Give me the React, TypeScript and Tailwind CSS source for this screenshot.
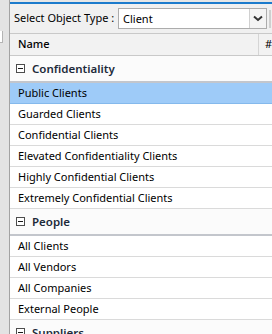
import React from 'react';

const groups = [
  {
    name: 'Confidentiality',
    items: [
      'Public Clients',
      'Guarded Clients',
      'Confidential Clients',
      'Elevated Confidentiality Clients',
      'Highly Confidential Clients',
      'Extremely Confidential Clients',
    ],
  },
  {
    name: 'People',
    items: ['All Clients', 'All Vendors', 'All Companies', 'External People'],
  },
  {
    name: 'Suppliers',
    items: ['All Suppliers'],
  },
];

const MinusBox: React.FC = () => (
  <svg width="9" height="9" viewBox="0 0 9 9" className="shrink-0">
    <rect x="0.5" y="0.5" width="8" height="8" fill="#fff" stroke="#4d4d4d" />
    <line x1="2" y1="4.5" x2="7" y2="4.5" stroke="#1a1a1a" />
  </svg>
);

const App: React.FC = () => {
  const selected = 'Public Clients';

  return (
    <div
      className="flex w-[272px] h-[334px] overflow-hidden bg-[#e6e6e6] text-[11px] text-black"
      style={{ fontFamily: '"Noto Sans", "Open Sans", sans-serif' }}
    >
      {/* Left pane edge */}
      <div className="w-[10px] shrink-0 flex flex-col border-r border-[#a3a3a3] bg-[#e3e3e3]">
        <div className="h-[31px]" />
        <div className="w-[3px] h-[12px] bg-white border-r border-b border-[#b4b4b4]" />
      </div>

      <div className="flex-1 min-w-0 flex flex-col">
        {/* Toolbar */}
        <div className="h-[33px] shrink-0 flex flex-col">
          <div className="h-[2px] bg-[#e6e6e6]" />
          <div className="h-[2px] bg-[#1c7bcc]" />
          <div className="flex-1 flex items-center bg-[#f0f0f0] pl-[4px]">
            <span className="w-[104px] shrink-0 whitespace-nowrap">Select Object Type :</span>
            <div className="flex h-[21px] w-[149px] shrink-0 border border-[#acacac] bg-white">
              <span className="flex-1 pl-[4px] leading-[19px]">Client</span>
              <div className="w-[17px] flex items-center justify-center border-l border-[#d0d0d0] bg-[#f4f4f4]">
                <svg width="10" height="7" viewBox="0 0 10 7">
                  <path d="M1 1.5 L5 5 L9 1.5" fill="none" stroke="#333" strokeWidth="2" />
                </svg>
              </div>
            </div>
            <div className="ml-[2px] w-[2px] h-[18px] bg-[#cfcfcf]" />
          </div>
        </div>

        {/* Column header */}
        <div className="h-[23px] shrink-0 flex items-center border-t border-b border-[#c9c9c9] bg-[#f2f2f2]">
          <span className="flex-1 pl-[8px] font-medium">Name</span>
          <div className="h-full w-px bg-[#d5d5d5]" />
          <span className="w-[13px] pl-[6px]">#</span>
        </div>

        {/* List */}
        <div className="flex-1 bg-[#fdfdfd]">
          {groups.map((g) => (
            <div key={g.name}>
              <div className="h-[27px] flex items-center gap-[7px] pl-[6px] border-b-2 border-[#c3c6cc] bg-[#fbfbfb]">
                <MinusBox />
                <span className="text-[11.5px] font-semibold text-[#1d2a3a]">{g.name}</span>
              </div>
              {g.items.map((item) => (
                <div
                  key={item}
                  className={
                    item === selected
                      ? 'h-[21px] flex items-center pl-[8px] whitespace-nowrap bg-[#9ecbf8] border-b border-[#84b9ec]'
                      : 'h-[21px] flex items-center pl-[8px] whitespace-nowrap bg-white border-b border-[#dadada]'
                  }
                >
                  {item}
                </div>
              ))}
            </div>
          ))}
        </div>
      </div>
    </div>
  );
};

export default App;
